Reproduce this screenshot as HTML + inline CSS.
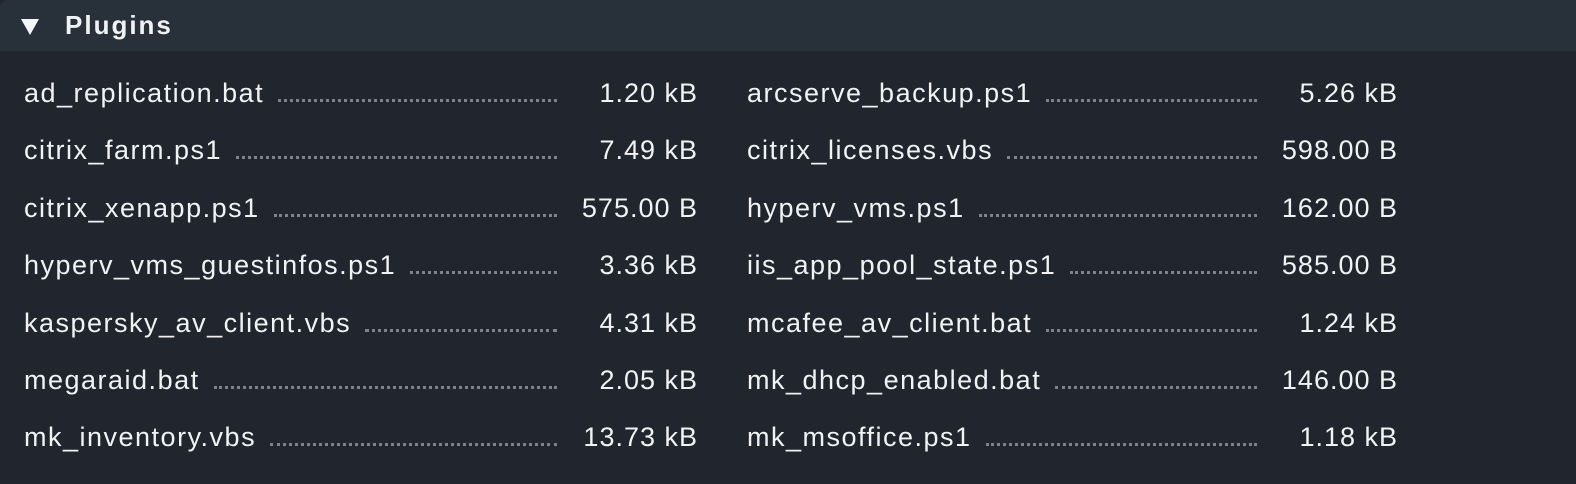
<!DOCTYPE html>
<html><head><style>
body{margin:0;width:1576px;height:484px;background:#21262e;font-family:"Liberation Sans",sans-serif;color:#f0f2f4;overflow:hidden;position:relative}
.hd{position:absolute;left:0;top:0;width:1576px;height:51px;background:#283039;border-top-left-radius:8px}
.hd .tri{position:absolute;left:21px;top:19px;width:0;height:0;border-left:9px solid transparent;border-right:9px solid transparent;border-top:16px solid #f4f6f8}
.hd .t{position:absolute;left:65px;top:10px;font-size:26px;font-weight:bold;letter-spacing:2px}
.row{position:absolute;height:32px;display:flex;align-items:flex-end;font-size:27px;letter-spacing:1.5px}
.row .n{white-space:nowrap}
.row .d{flex:1;margin:0 0 7px 14px;border-bottom:3px dotted #7c838c;height:0}
.row .s{white-space:nowrap;text-align:right;letter-spacing:1px}
</style></head><body>
<div class="hd"><div class="tri"></div><div class="t">Plugins</div></div>
<div id="c"></div>
<script>
const L=[["ad_replication.bat","1.20 kB"],["citrix_farm.ps1","7.49 kB"],["citrix_xenapp.ps1","575.00 B"],["hyperv_vms_guestinfos.ps1","3.36 kB"],["kaspersky_av_client.vbs","4.31 kB"],["megaraid.bat","2.05 kB"],["mk_inventory.vbs","13.73 kB"]];
const R=[["arcserve_backup.ps1","5.26 kB"],["citrix_licenses.vbs","598.00 B"],["hyperv_vms.ps1","162.00 B"],["iis_app_pool_state.ps1","585.00 B"],["mcafee_av_client.bat","1.24 kB"],["mk_dhcp_enabled.bat","146.00 B"],["mk_msoffice.ps1","1.18 kB"]];
let h="";
for(let i=0;i<7;i++){const y=77+i*57.4;
h+=`<div class="row" style="left:24px;top:${y}px;width:674px"><span class="n">${L[i][0]}</span><span class="d"></span><span class="s" style="width:141px">${L[i][1]}</span></div>`;
h+=`<div class="row" style="left:747px;top:${y}px;width:651px"><span class="n">${R[i][0]}</span><span class="d"></span><span class="s" style="width:141px">${R[i][1]}</span></div>`;}
document.getElementById("c").innerHTML=h;
</script>
</body></html>
